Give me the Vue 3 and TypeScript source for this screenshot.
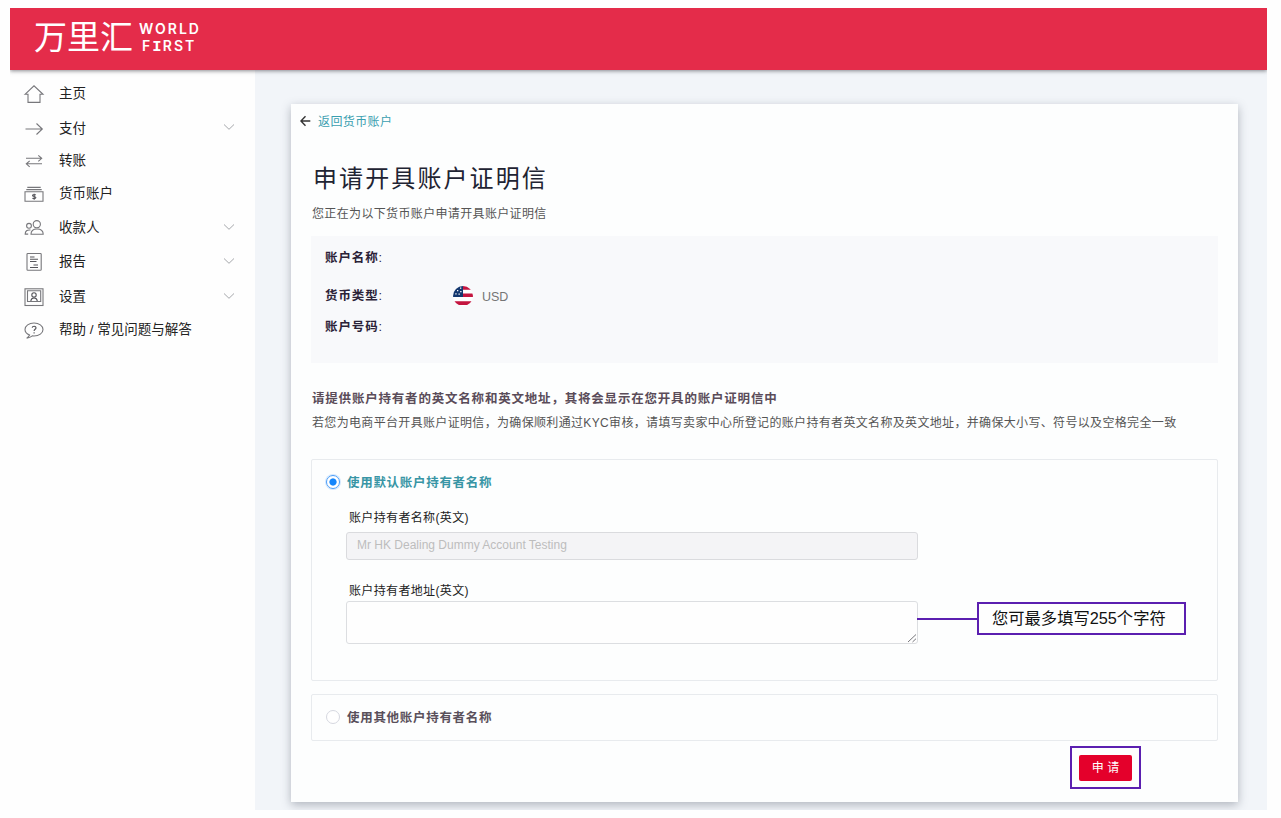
<script setup lang="ts">
import { ref } from 'vue'

interface NavItem {
  icon: string
  label: string
  expandable?: boolean
}

const navItems: NavItem[] = [
  { icon: 'home', label: '主页' },
  { icon: 'pay', label: '支付', expandable: true },
  { icon: 'transfer', label: '转账' },
  { icon: 'currency', label: '货币账户' },
  { icon: 'payee', label: '收款人', expandable: true },
  { icon: 'report', label: '报告', expandable: true },
  { icon: 'settings', label: '设置', expandable: true },
  { icon: 'help', label: '帮助 / 常见问题与解答' },
]

const choice = ref<'default' | 'other'>('default')
const address = ref('')
</script>

<template>
  <div class="page">
    <div class="app">
      <header class="topbar">
        <span class="brand-cn">万里汇</span>
        <span class="brand-en"><span class="world">WORLD</span><span class="first">F<span class="slab">I</span>RST</span></span>
      </header>

      <div class="body">
        <nav class="sidebar">
          <a v-for="item in navItems" :key="item.icon" class="nav-item">
            <svg class="nav-icon" width="22" height="22" viewBox="0 0 22 22">
              <path v-if="item.icon === 'home'" d="M2 11.3 11 2.8l9 8.500h-3V19.400H5V11.300Z" />
              <path v-else-if="item.icon === 'pay'" d="M2.500 11H19M13.500 5.500l5.800 5.500-5.800 5.500" />
              <path v-else-if="item.icon === 'transfer'" d="M3 8.300h15.500M15.300 5.300l3.400 3-3.400 3M19 13.800H3.500M6.700 10.800l-3.400 3 3.400 3" />
              <g v-else-if="item.icon === 'currency'">
                <path d="M4.300 4.400h13.400M3.300 6.600h15.400M2 8.800h18v9.400H2z" />
                <path class="heavy" d="M12.800 12c-.8-.7-3.300-.7-3.300.5s3.400.8 3.400 2.100-2.600 1.300-3.500.5M11.200 10.700v6" />
              </g>
              <g v-else-if="item.icon === 'payee'">
                <circle cx="13.800" cy="7.200" r="3.600" />
                <circle cx="6" cy="8.800" r="2.400" />
                <path d="M8 17.300c0-3.700 2.200-5.300 6-5.300s6.200 1.600 6.200 5.300ZM7.500 13C4 12.600 2.200 14 2.200 17.100h3" />
              </g>
              <g v-else-if="item.icon === 'report'">
                <rect x="4" y="2.500" width="14.200" height="16.800" rx=".8" />
                <path class="heavy" d="M7 6h4.500M7 8.300h8M7 10.500h6.500M10.500 14H15M7 16.500h8" />
              </g>
              <g v-else-if="item.icon === 'settings'">
                <rect x="2" y="2.800" width="18" height="16.700" />
                <path d="M4.500 4.800h13.200v10.700H4.500z" />
                <circle class="heavy" cx="11" cy="8.900" r="2.200" />
                <path class="heavy" d="M7.800 15c.3-2.300 1.300-3 3.200-3s3 .7 3.300 3" />
              </g>
              <g v-else>
                <path d="M6.600 16C3.600 14.800 2 12.900 2 10.500 2 6.700 6 4 11 4s9 2.700 9 6.500S16 17 11 17c-.6 0-1.200 0-1.700-.1-1.600 1.300-3.300 2-5.600 2.300 1.400-.9 2.400-1.900 2.900-3.200Z" />
                <path class="heavy" d="M9.200 8.800c.1-2 3.900-2 3.800.1-.1 1.400-1.900 1.400-1.900 3.100M11.100 13.300v1.200" />
              </g>
            </svg>
            <span class="nav-label">{{ item.label }}</span>
            <svg v-if="item.expandable" class="chevron" width="12" height="8" viewBox="0 0 12 8">
              <path d="M1 1.500 6 6.300l5-4.800" />
            </svg>
          </a>
        </nav>

        <main class="content">
          <section class="card">
            <a class="back">
              <svg width="11" height="12" viewBox="0 0 11 12"><path d="M10.300 6H1.200M5.500 1.300.9 6l4.600 4.700" /></svg>
              <span>返回货币账户</span>
            </a>

            <h1>申请开具账户证明信</h1>
            <p class="subtitle">您正在为以下货币账户申请开具账户证明信</p>

            <dl class="summary">
              <dt><b>账户名称</b>:</dt><dd></dd>
              <dt><b>货币类型</b>:</dt>
              <dd>
                <svg class="flag" width="20" height="20" viewBox="0 0 20 20">
                  <defs><clipPath id="flag-disc"><circle cx="10" cy="10" r="10" /></clipPath></defs>
                  <g clip-path="url(#flag-disc)">
                    <rect width="20" height="20" fill="#fff" />
                    <path fill="#c4153f" d="M10 0h10v3.700H10zM10 7.600h10v3.400H10zM0 15.300h20v3.700H0z" />
                    <rect width="10" height="11" fill="#14386f" />
                    <path fill="#fff" d="M7 1.500h1.300v1.300H7zM4 4h1.300v1.300H4zM7.200 5h1.300v1.300H7.200zM2.300 7.300h1.300v1.300H2.300zM5.500 7.500h1.300v1.300H5.500z" />
                  </g>
                </svg>
                <span class="code">USD</span>
              </dd>
              <dt><b>账户号码</b>:</dt><dd></dd>
            </dl>

            <h2>请提供账户持有者的英文名称和英文地址，其将会显示在您开具的账户证明信中</h2>
            <p class="note">若您为电商平台开具账户证明信，为确保顺利通过KYC审核，请填写卖家中心所登记的账户持有者英文名称及英文地址，并确保大小写、符号以及空格完全一致</p>

            <div class="option option-main" :class="{ active: choice === 'default' }">
              <label class="option-title" @click="choice = 'default'">
                <i class="radio"></i><span>使用默认账户持有者名称</span>
              </label>
              <div class="fields">
                <label class="field-label">账户持有者名称(英文)</label>
                <div class="input disabled"><span class="value">Mr HK Dealing Dummy Account Testing</span></div>
                <label class="field-label second">账户持有者地址(英文)</label>
                <div class="area-wrap">
                  <textarea v-model="address" maxlength="255"></textarea>
                  <svg class="grip" width="10" height="10" viewBox="0 0 10 10"><path d="M1 9 9 1.500M5.500 9 9 5.700" /></svg>
                  <div class="callout"><span>您可最多填写255个字符</span></div>
                </div>
              </div>
            </div>

            <div class="option option-other" :class="{ active: choice === 'other' }">
              <label class="option-title" @click="choice = 'other'">
                <i class="radio"></i><span>使用其他账户持有者名称</span>
              </label>
            </div>

            <div class="actions">
              <div class="highlight"><button type="button">申 请</button></div>
            </div>
          </section>
        </main>
      </div>
    </div>
  </div>
</template>

<style>
body {
  background: #fefefe;
  overflow: hidden;
}
</style>

<style scoped>
* {
  box-sizing: border-box;
}
.page {
  height: 818px;
  padding: 8px 14px 8px 10px;
  font-family: "Liberation Sans", "Noto Sans CJK SC", sans-serif;
  color: #333;
}
.app {
  height: 802px;
  display: flex;
  flex-direction: column;
}
.topbar {
  position: relative;
  z-index: 1;
  height: 62px;
  flex: none;
  display: flex;
  padding-left: 24px;
  background: #e42c4a;
  color: #fff;
  box-shadow: 0 1px 4px rgba(40, 40, 50, 0.55);
  clip-path: inset(0 0 -8px 0);
}
.brand-cn {
  width: 105px;
  font-size: 33px;
  line-height: 60px;
  white-space: nowrap;
}
.brand-en {
  display: flex;
  flex-direction: column;
  padding-top: 12px;
  font-family: Inter, "Liberation Sans", sans-serif;
  font-weight: 600;
  font-size: 14px;
  line-height: 17px;
}
.world {
  letter-spacing: 2px;
}
.first {
  height: 17px;
  padding-left: 3px;
  letter-spacing: 2.100px;
}
.slab {
  font-family: "Liberation Mono", monospace;
  font-size: 15.500px;
  font-weight: 700;
  line-height: 10px;
  letter-spacing: 1px;
}
.body {
  flex: 1;
  display: flex;
  min-height: 0;
}
.sidebar {
  width: 245px;
  flex: none;
  display: grid;
  grid-template-rows: 33px 36px 29px 36px 33px 35px 35px 30px;
  align-content: start;
  padding-top: 7px;
  background: #fefefe;
}
.nav-item {
  display: flex;
  align-items: center;
  padding: 0 20px 0 13px;
  font-size: 13.500px;
  color: #222;
}
.nav-icon {
  margin: 1px 14px 0 0;
  fill: none;
  stroke: #77777b;
  stroke-width: 1.100;
}
.heavy {
  stroke: #55555a;
  stroke-width: 1.100;
}
.nav-label {
  flex: 1;
  line-height: 20px;
  padding-top: 1px;
  white-space: nowrap;
}
.chevron {
  margin-top: -2px;
  fill: none;
  stroke: #a6a8ac;
  stroke-width: 1;
}
.content {
  flex: 1;
  min-width: 0;
  padding: 34px 29px 8px 36px;
  background: #f2f5f9;
  overflow: hidden;
}
.card {
  height: 698px;
  padding: 7px 20px 0;
  background: #fdfefe;
  box-shadow: 0 3px 9px rgba(60, 70, 85, 0.36);
}
.back {
  display: flex;
  align-items: center;
  gap: 7px;
  height: 18px;
  margin-left: -11px;
  font-size: 12px;
  letter-spacing: 0.4px;
  color: #3a9fb0;
}
.back svg {
  margin-top: 2px;
  fill: none;
  stroke: #333;
  stroke-width: 1.400;
}
h1 {
  height: 36px;
  margin: 32px 0 0 2px;
  font-size: 24px;
  line-height: 36px;
  font-weight: 400;
  letter-spacing: 2.100px;
  color: #1f2433;
}
.subtitle {
  height: 18px;
  margin: 8px 0 0 1px;
  font-size: 12px;
  line-height: 18px;
  letter-spacing: 0.35px;
  color: #555;
}
.summary {
  display: grid;
  grid-template-columns: 128px 1fr;
  grid-template-rows: 38px 38px 24px;
  align-items: center;
  height: 127px;
  margin: 13px 0 0;
  padding: 3px 14px 0;
  background: #f8f9fb;
  font-size: 12.500px;
}
.summary dt {
  line-height: 18px;
  letter-spacing: 0.9px;
  color: #2b2237;
}
.summary dd {
  display: flex;
  align-items: center;
  gap: 9px;
  margin: 0;
}
.code {
  padding-top: 2px;
  font-size: 12.500px;
  color: #757575;
}
h2 {
  height: 18px;
  margin: 27px 0 0 1px;
  font-size: 12.500px;
  line-height: 18px;
  font-weight: 700;
  letter-spacing: 0.8px;
  white-space: nowrap;
  color: #5a4c59;
}
.note {
  height: 18px;
  margin: 6px 0 0 1px;
  font-size: 12px;
  line-height: 18px;
  letter-spacing: 0.335px;
  white-space: nowrap;
  color: #555;
}
.option {
  border: 1px solid #e8ebee;
  border-radius: 2px;
}
.option-main {
  height: 222px;
  margin-top: 27px;
  padding-top: 12px;
}
.option-other {
  height: 47px;
  margin-top: 13px;
  padding-top: 12px;
}
.option-title {
  display: flex;
  align-items: center;
  gap: 7px;
  height: 18px;
  padding-left: 14px;
  font-size: 12.500px;
  font-weight: 700;
  letter-spacing: 0.7px;
  color: #5a505b;
}
.active .option-title {
  color: #3895a5;
}
.radio {
  width: 14px;
  height: 14px;
  margin-top: 2px;
  border: 1px solid #d6d8e0;
  border-radius: 50%;
  background: #fff;
}
.active .radio {
  border-color: #4a9df8;
  background: radial-gradient(circle, #1485fb 0 3.200px, #fff 4px);
  box-shadow: 0 0 0 1px #d3e7fe;
}
.fields {
  padding: 19px 0 0 34px;
}
.field-label {
  display: block;
  height: 18px;
  margin-left: 3px;
  font-size: 12px;
  line-height: 18px;
  letter-spacing: 0.35px;
  color: #222;
}
.input {
  width: 572px;
  height: 28px;
  margin-top: 5px;
  padding-left: 10px;
  border: 1px solid #dadbde;
  border-radius: 3px;
  font-size: 12px;
  line-height: 25px;
}
.input.disabled {
  background: #f4f4f6;
  color: #bdbdbd;
}
.field-label.second {
  margin-top: 22px;
}
.area-wrap {
  position: relative;
  width: 572px;
  height: 43px;
  margin-top: 1px;
}
textarea {
  display: block;
  width: 100%;
  height: 100%;
  padding: 4px 11px;
  border: 1px solid #dcdee1;
  border-radius: 3px;
  outline: none;
  resize: none;
  background: #fefefe;
  font: inherit;
}
.grip {
  position: absolute;
  right: 1px;
  bottom: 1px;
  fill: none;
  stroke: #77777c;
  stroke-width: 1;
}
.callout {
  position: absolute;
  left: 631px;
  top: 1px;
  width: 209px;
  height: 33px;
  padding-left: 13px;
  border: 2px solid #5b1fb0;
  background: #fefefe;
  font-size: 16.300px;
  line-height: 29px;
  white-space: nowrap;
  color: #111;
}
.callout::before {
  content: "";
  position: absolute;
  left: -62px;
  top: 14px;
  width: 61px;
  height: 2px;
  background: #5b1fb0;
}
.actions {
  display: flex;
  justify-content: flex-end;
  padding: 5px 77px 0 0;
}
.highlight {
  width: 71px;
  height: 43px;
  padding: 7px;
  border: 2px solid #5b1fb0;
}
button {
  display: block;
  width: 53px;
  height: 26px;
  padding: 0;
  border: 0;
  border-radius: 2px;
  background: #e4002b;
  color: #fff;
  font-family: inherit;
  font-size: 12px;
  line-height: 24px;
}
</style>
